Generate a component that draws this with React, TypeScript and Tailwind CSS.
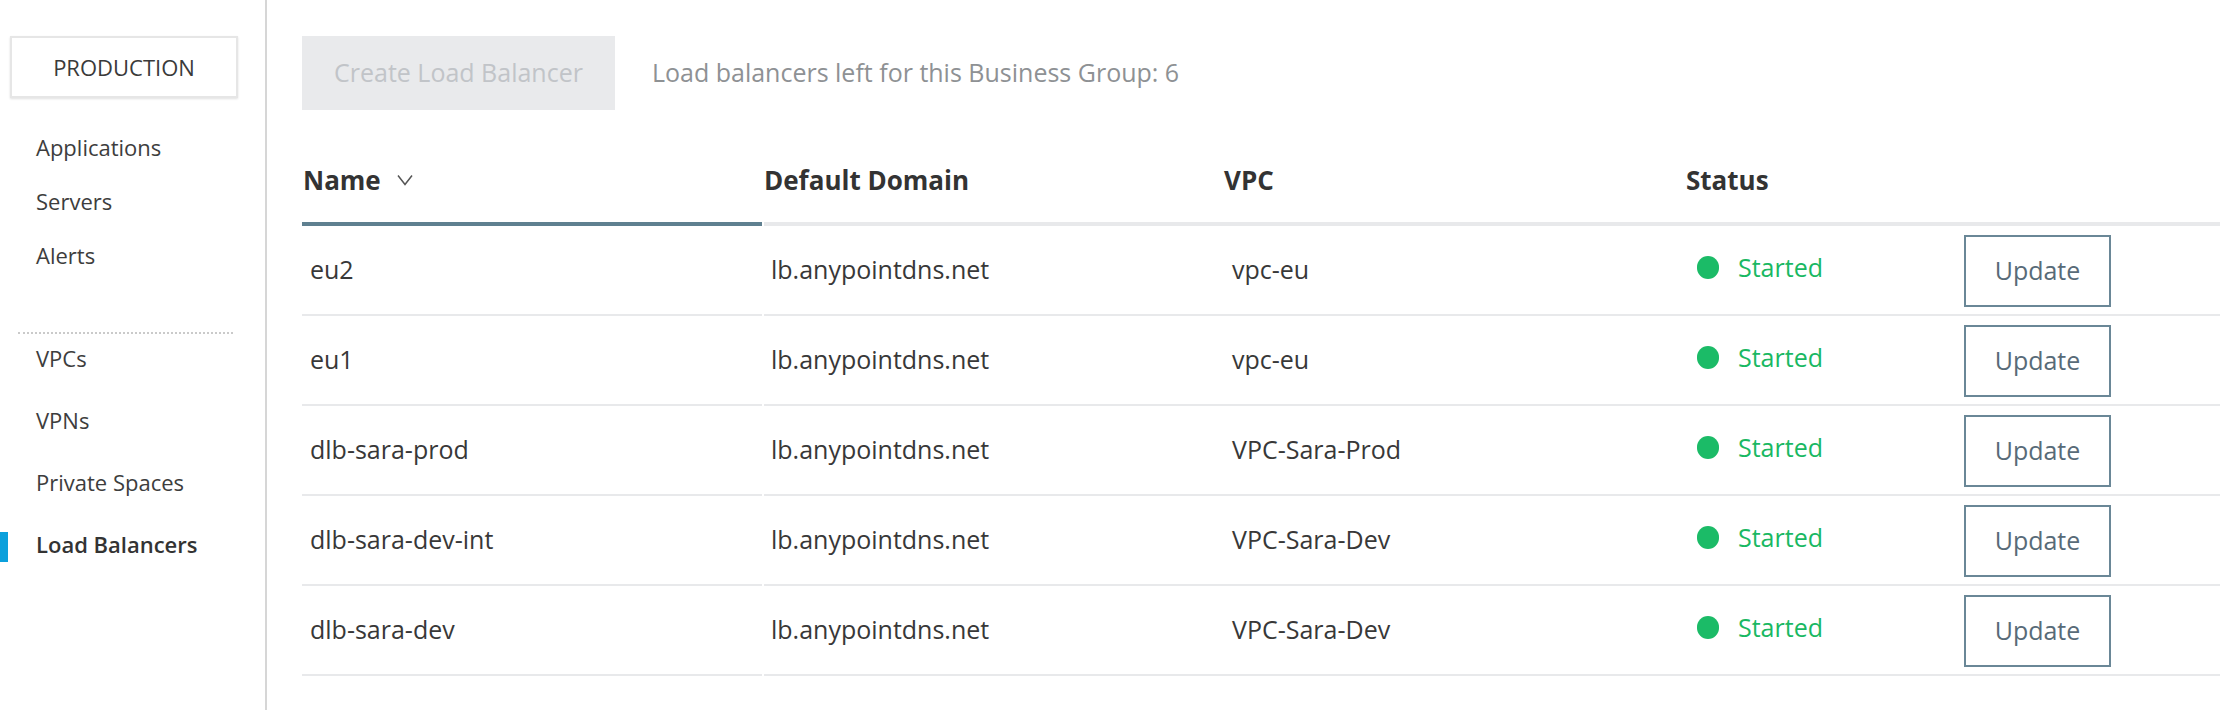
const rows = [
  { name: "eu2", domain: "lb.anypointdns.net", vpc: "vpc-eu" },
  { name: "eu1", domain: "lb.anypointdns.net", vpc: "vpc-eu" },
  { name: "dlb-sara-prod", domain: "lb.anypointdns.net", vpc: "VPC-Sara-Prod" },
  { name: "dlb-sara-dev-int", domain: "lb.anypointdns.net", vpc: "VPC-Sara-Dev" },
  { name: "dlb-sara-dev", domain: "lb.anypointdns.net", vpc: "VPC-Sara-Dev" },
];

function NavItem({ label, active = false }: { label: string; active?: boolean }) {
  return (
    <div className="relative h-[30px] flex items-center pl-[36px]">
      {active && <span className="absolute left-0 top-[3px] h-[30px] w-[8px] bg-[#0ba0dc]" />}
      <span className={active ? "font-semibold text-[#333]" : "text-[#3d3d3d]"}>{label}</span>
    </div>
  );
}

export default function App() {
  return (
    <div className="h-[710px] w-[2220px] flex bg-white font-['Open_Sans',sans-serif] overflow-hidden">
      {/* Sidebar */}
      <aside className="w-[267px] shrink-0 border-r-2 border-[#d6d6d6] text-[22px]">
        <div className="ml-[10px] mt-[36px] w-[228px] h-[62px] border-2 border-[#e6e6e6] shadow-[0_1px_2px_rgba(0,0,0,0.12)] flex items-center justify-center text-[#3a3a3a]">
          PRODUCTION
        </div>

        <div className="mt-[34px] flex flex-col gap-[24px]">
          <NavItem label="Applications" />
          <NavItem label="Servers" />
          <NavItem label="Alerts" />
        </div>

        <div className="mx-[18px] mt-[62px] w-[215px] border-t-2 border-dotted border-[#cacaca]" />

        <div className="mt-[9px] flex flex-col gap-[32px]">
          <NavItem label="VPCs" />
          <NavItem label="VPNs" />
          <NavItem label="Private Spaces" />
          <NavItem label="Load Balancers" active />
        </div>
      </aside>

      {/* Main */}
      <main className="flex-1 pl-[35px] pt-[36px]">
        <div className="flex items-center">
          <button className="h-[74px] px-[32px] bg-[#e9eaec] text-[#c1c4c8] text-[25px]">
            Create Load Balancer
          </button>
          <span className="ml-[37px] text-[25px] text-[#8e9194]">
            Load balancers left for this Business Group: 6
          </span>
        </div>

        {/* Table header */}
        <div className="mt-[38px] flex text-[26px] font-bold text-[#333]">
          <div className="w-[460px] mr-[2px] h-[78px] pb-[10px] flex items-center pl-[1px] border-b-4 border-[#5f8090]">
            Name
            <svg className="ml-[16px]" width="16" height="12" viewBox="0 0 16 12" fill="none">
              <path d="M1 1.5 L8 10.5 L15 1.5" stroke="#555" strokeWidth="1.5" />
            </svg>
          </div>
          <div className="w-[460px] h-[78px] pb-[10px] flex items-center border-b-4 border-[#e8e9eb]">
            Default Domain
          </div>
          <div className="w-[462px] h-[78px] pb-[10px] flex items-center border-b-4 border-[#e8e9eb]">
            VPC
          </div>
          <div className="w-[278px] h-[78px] pb-[10px] flex items-center border-b-4 border-[#e8e9eb]">
            Status
          </div>
          <div className="flex-1 h-[78px] border-b-4 border-[#e8e9eb]" />
        </div>

        {/* Table rows */}
        {rows.map((r) => (
          <div key={r.name} className="flex text-[25px] text-[#383838]">
            <div className="w-[460px] mr-[2px] h-[90px] flex items-center pl-[8px] border-b-2 border-[#e8e9eb]">
              {r.name}
            </div>
            <div className="w-[460px] h-[90px] flex items-center pl-[7px] border-b-2 border-[#e8e9eb]">
              {r.domain}
            </div>
            <div className="w-[462px] h-[90px] flex items-center pl-[8px] border-b-2 border-[#e8e9eb]">
              {r.vpc}
            </div>
            <div className="w-[278px] h-[90px] flex items-center pl-[11px] pb-[5px] border-b-2 border-[#e8e9eb] text-[#19b862]">
              <span className="w-[22px] h-[23px] rounded-full bg-[#1bbb67]" />
              <span className="ml-[19px]">Started</span>
            </div>
            <div className="flex-1 h-[90px] flex items-center pl-[0px] border-b-2 border-[#e8e9eb]">
              <button className="w-[147px] h-[72px] mt-[2px] border-2 border-[#6a8797] text-[#586b78] text-[25px]">
                Update
              </button>
            </div>
          </div>
        ))}
      </main>
    </div>
  );
}
